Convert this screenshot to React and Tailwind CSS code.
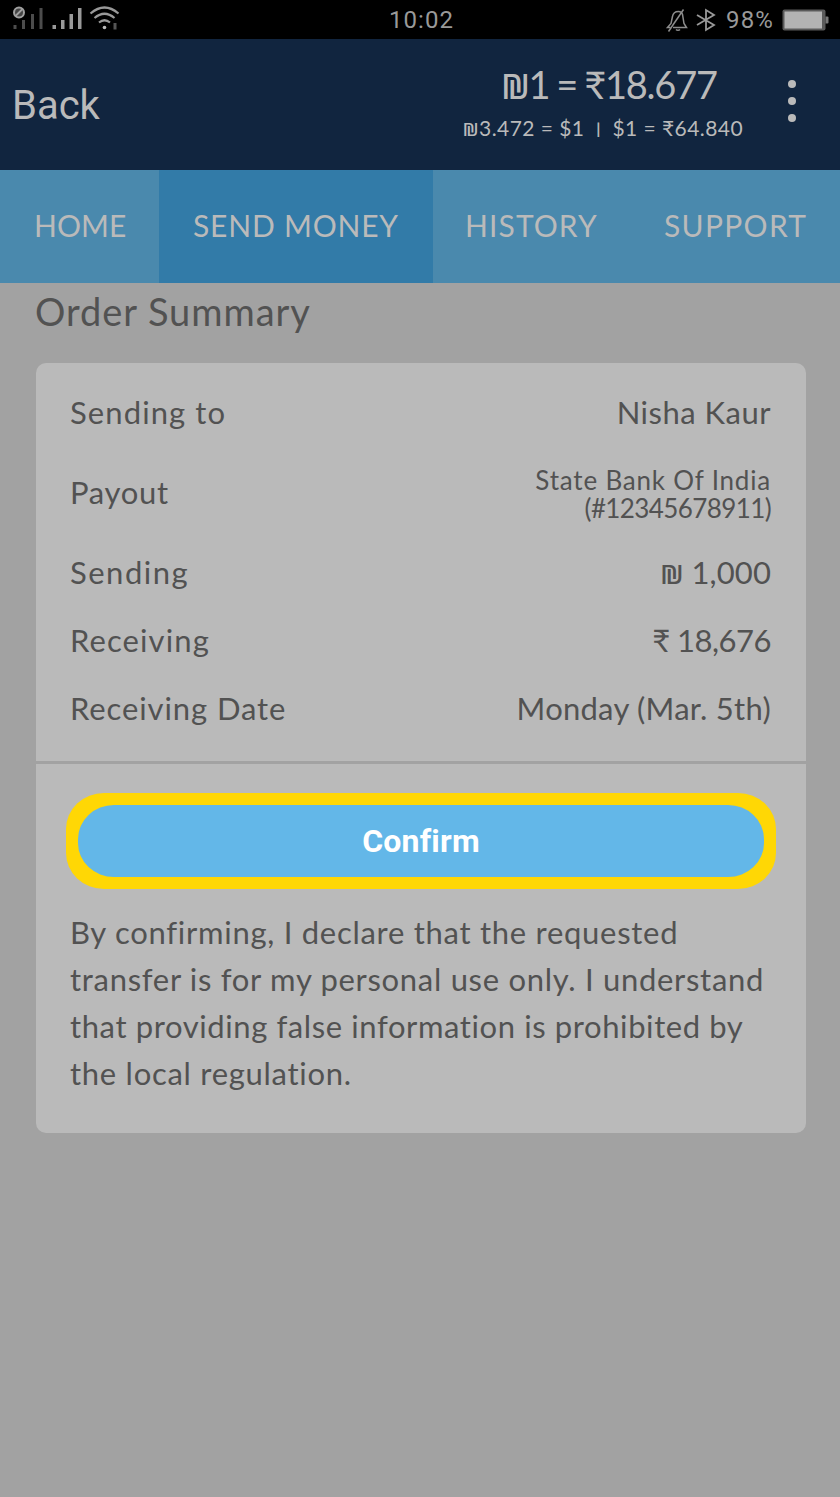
const tabs = [
    { label: "HOME", className: "w-[159px] pl-[34px] tracking-[0.1px]" },
    { label: "SEND MONEY", className: "w-[274px] pl-[34px] tracking-[0.8px] bg-[#327ba8]" },
    { label: "HISTORY", className: "w-[199px] pl-[32px] tracking-[1.1px]" },
    { label: "SUPPORT", className: "w-[208px] pl-[32px] tracking-[1.3px]" },
];

const rows = [
    { label: "Sending to", labelClass: "tracking-[1.1px]", value: "Nisha Kaur", valueClass: "tracking-[0.5px]", height: "h-[68px]" },
    { label: "Payout", labelClass: "tracking-[0.7px]", bank: "State Bank Of India", account: "(#12345678911)", height: "h-[92px]" },
    { label: "Sending", labelClass: "tracking-[1.5px]", value: "1,000", currency: "₪", valueClass: "tracking-[0.1px]", height: "h-[68px]" },
    { label: "Receiving", labelClass: "tracking-[1.1px]", value: "18,676", currency: "₹", valueClass: "tracking-[-0.5px]", height: "h-[68px]" },
    { label: "Receiving Date", labelClass: "tracking-[0.9px]", value: "Monday (Mar. 5th)", valueClass: "tracking-[0.25px]", height: "h-[68px]" },
];

const disclaimer = [
    { text: "By confirming, I declare that the requested", className: "tracking-[0.72px]" },
    { text: "transfer is for my personal use only. I understand", className: "tracking-[0.7px]" },
    { text: "that providing false information is prohibited by", className: "tracking-[0.6px]" },
    { text: "the local regulation.", className: "tracking-[0.72px]" },
];

function SignalIcons() {
    return (
        <svg width="175" height="39" viewBox="0 0 175 39" fill="none">
            <g fill="#4c4c4c">
                <rect x="13.5" y="25" width="3" height="4" />
                <rect x="22" y="20" width="3" height="9" />
                <rect x="31" y="14" width="3" height="15" />
                <rect x="39.5" y="8" width="3" height="21" />
            </g>
            <circle cx="19" cy="12.5" r="5" fill="#444" stroke="#a0a0a0" strokeWidth="2" />
            <path d="M15.500 16L22.500 9" stroke="#a0a0a0" strokeWidth="1.800" />
            <g fill="#999">
                <rect x="52.500" y="25" width="3.500" height="4" />
                <rect x="61" y="20" width="3.500" height="9" />
                <rect x="69.500" y="14" width="3.500" height="15" />
                <rect x="78" y="8" width="3.500" height="21" />
            </g>
            <g stroke="#999" strokeWidth="2.200">
                <path d="M90.500 13.500Q104.500 1.500 118.500 13.500" />
                <path d="M94.500 18Q104.500 9.500 114.500 18" />
                <path d="M99 22.500Q104.500 18 110 22.500" />
            </g>
            <circle cx="104.500" cy="27.500" r="1.800" fill="#bbb" />
            <rect x="113.500" y="23" width="3" height="6.500" fill="#555" />
        </svg>
    );
}

function MutedBell() {
    return (
        <svg width="24" height="26" viewBox="0 0 24 26" fill="none" stroke="#8d8d8d" strokeWidth="1.500">
            <path d="M8 20.500h13.500l-2.500-4-1.500-9c-.5-2-2-3-4-3-3.500 0-5.500 2-6 5l-1.500 7-3.500 4h3" />
            <path d="M18.500 2.500L3.500 24.500" />
            <path d="M11 22.500c1 1 3 1 4 0" />
        </svg>
    );
}

function Bluetooth() {
    return (
        <svg width="20" height="24" viewBox="0 0 20 24" fill="none" stroke="#999" strokeWidth="1.800">
            <path d="M1 7l17 10-8 5V2l8 5L1 17" />
        </svg>
    );
}

function Battery() {
    return (
        <svg width="48" height="22" viewBox="0 0 48 22">
            <rect x="0.500" y="0.500" width="43" height="21" rx="2" fill="#5a5a5a" />
            <rect x="2.500" y="2.500" width="37.500" height="17" fill="#b3b3b3" />
            <path d="M43.500 7.500h2q1 0 1 1v5q0 1-1 1h-2z" fill="#777" />
        </svg>
    );
}

function Shekel() {
    return <span className="font-['Open_Sans','Noto_Sans',sans-serif] font-semibold text-[0.88em]">₪</span>;
}

function StatusBar() {
    return (
        <div className="h-[39px] bg-black flex items-center justify-between font-['Roboto',sans-serif] text-[24px] text-[#999999]">
            <SignalIcons />
            <div className="pl-[3px] tracking-[1px]">10:02</div>
            <div className="w-[175px] flex items-center">
                <MutedBell />
                <span className="w-[7px]" />
                <Bluetooth />
                <span className="ml-[10px] w-[56px] whitespace-nowrap tracking-[1.2px]">98%</span>
                <Battery />
            </div>
        </div>
    );
}

function Header() {
    return (
        <header className="h-[131px] bg-[#11253f] flex text-[#bababa]">
            <div className="w-[458px] pl-[12px] pt-[43px] font-['Roboto',sans-serif] text-[40px] leading-[48px]">Back</div>
            <div className="w-[290px] pt-[22px] text-center whitespace-nowrap">
                <div className="pl-[12px] text-[38px] leading-[46px] tracking-[-1.2px] [word-spacing:-1.5px]"><Shekel />1 = ₹18.677</div>
                <div className="mt-[7px] text-[21px] leading-[24px] whitespace-pre tracking-[0.45px]">
                    <Shekel />{"3.472 = $1  "}<span className="inline-block text-[16px] font-bold -translate-y-[2px]">|</span>{"  $1 = ₹64.840"}
                </div>
            </div>
            <div className="w-[88px] pt-[41px] flex flex-col items-center gap-[9px]">
                <span className="size-[8px] rounded-full bg-[#bababa]" />
                <span className="size-[8px] rounded-full bg-[#bababa]" />
                <span className="size-[8px] rounded-full bg-[#bababa]" />
            </div>
        </header>
    );
}

export default function App() {
    return (
        <div className="w-[840px] h-[1497px] overflow-hidden bg-[#a2a2a2] font-['Lato','Noto_Sans',sans-serif] text-[#525252]">
            <StatusBar />
            <Header />

            <nav className="h-[113px] flex bg-[#4a89ad] text-[#bababa] text-[30px] leading-[110px] whitespace-nowrap">
                {tabs.map((t) => (
                    <div key={t.label} className={t.className}>{t.label}</div>
                ))}
            </nav>

            <h1 className="ml-[35px] h-[80px] pt-[5px] text-[38px] leading-[46px] tracking-[0.95px]">Order Summary</h1>

            <main className="ml-[36px] w-[770px] h-[770px] rounded-[10px] bg-[#bababa]">
                <div className="h-[401px] pl-[34px] pr-[35px] pt-[15px] border-b-[3px] border-[#a2a2a2] text-[31px]">
                    {rows.map((r) => (
                        <div key={r.label} className={`flex items-center justify-between ${r.height}`}>
                            <span className={r.labelClass}>{r.label}</span>
                            {r.bank ? (
                                <div className="mt-[4px] text-right text-[26px] leading-[28px]">
                                    <div className="tracking-[0.8px]">{r.bank}</div>
                                    <div className="tracking-[-0.6px]">{r.account}</div>
                                </div>
                            ) : (
                                <span className={r.valueClass}>
                                    {r.currency === "₪" ? <Shekel /> : r.currency}
                                    {r.currency && " "}
                                    {r.value}
                                </span>
                            )}
                        </div>
                    ))}
                </div>

                <div className="mt-[29px] mx-[30px] h-[96px] p-[12px] bg-[#ffd705] rounded-[38px/36px]">
                    <button className="block w-full h-[72px] rounded-[36px/34px] bg-[#63b7e8] text-white font-['Roboto',sans-serif] font-bold text-[32px] tracking-[0.2px]">
                        Confirm
                    </button>
                </div>

                <div className="mt-[20px] ml-[34px] text-[31px] leading-[47px] whitespace-nowrap">
                    {disclaimer.map((line) => (
                        <p key={line.text} className={line.className}>{line.text}</p>
                    ))}
                </div>
            </main>
        </div>
    );
}
